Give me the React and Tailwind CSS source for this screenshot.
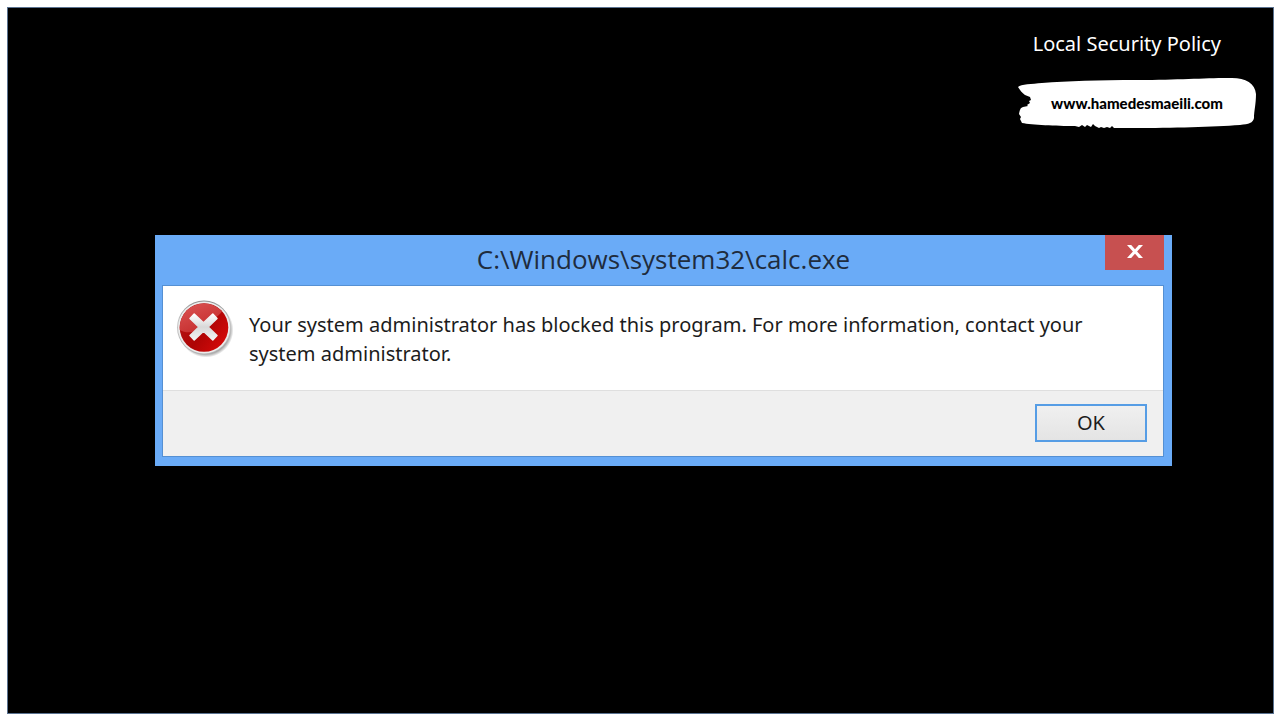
import React from 'react';

const SITE = 'www.hamedesmaeili.com';

/**
 * White brush stroke behind the site link
 */
const BrushStroke = () => (
    <svg
        className="absolute inset-0 h-full w-full"
        viewBox="0 0 238 52"
        preserveAspectRatio="none"
        aria-hidden="true"
    >
        <path
            fill="#fff"
            d="M0 10C3 7 14 7 24 6C50 4 80 3 120 3C160 3 185 1 210 1C226 0 237 5 238 17C238 27 236 34 236 41C235 46 231 47 222 48C195 50 155 51 115 51L96 51L94 49L92 51L89 50L86 51L83 50L81 51L77 49L75 47L73 50L69 48L67 50L64 48L61 50L57 49C38 49 14 48 4 46L2 42L3 40L1 37C2 33 2 31 5 30L10 29L9 28L12 26L11 24L13 23L12 20L7 18C4 16 2 13 0 10Z"
        />
    </svg>
);

/**
 * Glossy red error badge
 */
const ErrorIcon = () => (
    <svg className="h-[58px] w-[58px] shrink-0" viewBox="0 0 58 58" role="img" aria-label="Error">
        <defs>
            <linearGradient id="ring" x1="0" y1="0" x2="0" y2="1">
                <stop offset="0" stopColor="#8f8f8f" />
                <stop offset="0.4" stopColor="#c4c4c4" />
                <stop offset="1" stopColor="#b4b4b4" />
            </linearGradient>
            <linearGradient id="disc" x1="0" y1="0.2" x2="1" y2="0.9">
                <stop offset="0" stopColor="#b51515" />
                <stop offset="0.5" stopColor="#ae0505" />
                <stop offset="1" stopColor="#dc0a0a" />
            </linearGradient>
            <linearGradient id="gloss" x1="0" y1="0" x2="0.6" y2="1">
                <stop offset="0" stopColor="#dc5555" />
                <stop offset="1" stopColor="#c42c2c" />
            </linearGradient>
            <linearGradient id="cross" x1="0" y1="0" x2="0" y2="1">
                <stop offset="0" stopColor="#fff" />
                <stop offset="0.5" stopColor="#d8d8d8" />
                <stop offset="1" stopColor="#f4f4f4" />
            </linearGradient>
            <radialGradient id="shade">
                <stop offset="0.85" stopColor="#555" stopOpacity="0.6" />
                <stop offset="1" stopColor="#555" stopOpacity="0" />
            </radialGradient>
        </defs>
        <circle cx="30" cy="30" r="27.5" fill="url(#shade)" />
        <circle cx="28" cy="27.5" r="27" fill="url(#ring)" />
        <circle cx="28" cy="27.5" r="26" fill="#ececec" />
        <circle cx="28" cy="27.5" r="24.3" fill="url(#disc)" />
        <path d="M3.8 30A24.3 24.3 0 0 1 46 11.5C42 17 34 21 27 26C19 33 11 34 3.8 30Z" fill="url(#gloss)" />
        <path
            d="M18.2 14L27.5 22.8L36.8 14L41 18.4L32.2 27L41 35.6L36.8 40L27.5 31.2L18.2 40L14 35.6L22.8 27L14 18.4Z"
            fill="url(#cross)"
            stroke="url(#cross)"
            strokeWidth="1.5"
            strokeLinejoin="round"
        />
    </svg>
);

const CloseIcon = () => (
    <svg className="h-[13px] w-4" viewBox="0 0 16 13" aria-hidden="true">
        <path d="M0 0H4.2L8 4.2L11.8 0H16L10.1 6.4L16 13H11.8L8 8.7L4.2 13H0L5.9 6.4Z" fill="#fff" />
    </svg>
);

const SlideHeader = () => (
    <header className="flex flex-col items-end">
        <h1 className="mr-[52px] mt-[22px] font-['Noto_Sans','Open_Sans',sans-serif] text-[20px] leading-7 text-white">
            Local Security Policy
        </h1>
        <a
            href="http://www.hamedesmaeili.com"
            className="relative mr-[17px] mt-[19px] flex h-[52px] w-[238px] items-center justify-center text-black"
        >
            <BrushStroke />
            <span className="relative font-['Lato',sans-serif] text-[15px] font-black leading-5">{SITE}</span>
        </a>
    </header>
);

const BlockedDialog = () => (
    <section
        role="alertdialog"
        aria-labelledby="dialog-title"
        aria-describedby="dialog-message"
        className="ml-[147px] mr-[101px] mt-[106px] bg-[#6aabf7] px-[7px] pb-[9px] font-['Noto_Sans','Open_Sans',sans-serif] text-[#1c1c1c]"
    >
        <div className="grid h-[50px] grid-cols-[60px_1fr_60px]">
            <h2
                id="dialog-title"
                className="col-start-2 text-center font-['Open_Sans',sans-serif] text-[26px] leading-[48px] text-[#1f2c3d]"
            >
                C:\Windows\system32\calc.exe
            </h2>
            <button
                type="button"
                aria-label="Close"
                className="flex h-[35px] w-[59px] items-center justify-center bg-[#c75050] pb-[3px]"
            >
                <CloseIcon />
            </button>
        </div>
        <div className="mr-px border border-[#5590d3] bg-white">
            <div className="flex h-[104px] items-start gap-[15px] px-[13px] pt-[14px]">
                <ErrorIcon />
                <p id="dialog-message" className="max-w-[860px] pt-[10px] text-[20px] leading-[29px]">
                    Your system administrator has blocked this program. For more information, contact your
                    system administrator.
                </p>
            </div>
            <div className="flex justify-end border-t border-[#dfdfdf] bg-[#f0f0f0] px-4 pb-[14px] pt-[13px]">
                <button
                    type="button"
                    className="h-[38px] w-28 border-2 border-[#569de5] bg-linear-to-b from-[#f0f0f0] to-[#e4e4e4] text-[20px] leading-8"
                >
                    OK
                </button>
            </div>
        </div>
    </section>
);

const App = () => (
    <div className="flex min-h-screen bg-white p-[7px] pr-[6px] pb-[6px]">
        <main className="flex-1 border border-[#5a7290] bg-black">
            <SlideHeader />
            <BlockedDialog />
        </main>
    </div>
);

export default App;
